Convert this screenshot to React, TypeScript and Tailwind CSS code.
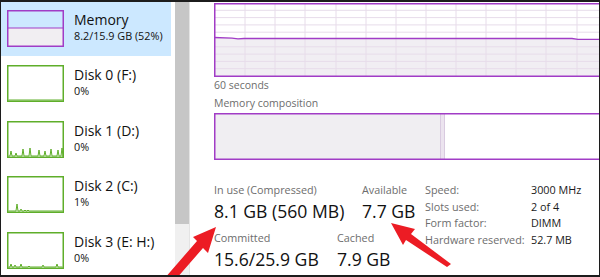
import type { ReactNode } from "react";

const purple = "#a13cc6";
const green = "#5fae2a";

type Row = { title: string; sub: string; kind: "mem" | "disk"; spikes?: number[][] };

const rows: Row[] = [
  { title: "Memory", sub: "8.2/15.9 GB (52%)", kind: "mem" },
  { title: "Disk 0 (F:)", sub: "0%", kind: "disk", spikes: [] },
  {
    title: "Disk 1 (D:)",
    sub: "0%",
    kind: "disk",
    spikes: [[4, 5], [9, 3], [16, 7], [23, 8], [32, 6], [38, 5], [44, 7], [51, 6], [55, 8]],
  },
  { title: "Disk 2 (C:)", sub: "1%", kind: "disk", spikes: [[10, 7], [14, 2], [18, 1], [21, 1]] },
  { title: "Disk 3 (E: H:)", sub: "0%", kind: "disk", spikes: [[4, 3], [8, 2], [14, 3], [22, 1], [36, 2], [50, 3]] },
];

function Thumb({ row }: { row: Row }) {
  if (row.kind === "mem") {
    return (
      <svg width="57" height="37" viewBox="0 0 57 37" className="shrink-0">
        <rect x="0.75" y="18" width="55.5" height="18" fill="#f1eef2" />
        <line x1="0.75" y1="18" x2="56.25" y2="18" stroke={purple} strokeWidth="1.2" />
        <rect x="0.75" y="0.75" width="55.5" height="35.5" fill="none" stroke={purple} strokeWidth="1.5" />
      </svg>
    );
  }
  const base = 35;
  let d = `M1.5 ${base}`;
  for (const [x, h] of row.spikes ?? []) {
    d += ` L${x - 1} ${base} L${x} ${base - h} L${x + 1} ${base}`;
  }
  d += ` L55.5 ${base}`;
  return (
    <svg width="57" height="37" viewBox="0 0 57 37" className="shrink-0">
      <path d={d} fill="none" stroke={green} strokeWidth="1" />
      <rect x="0.75" y="0.75" width="55.5" height="35.5" fill="none" stroke={green} strokeWidth="1.5" />
    </svg>
  );
}

function UsageChart() {
  const w = 400;
  const h = 74;
  const vx = [31, 61, 91, 122, 152, 182, 212, 242, 272, 302, 332, 363, 393];
  const hy = [7.3, 14.6, 21.9, 29.2, 43.8, 51.1, 58.4, 65.7];
  const line = "M0 34.5 L18 35.2 L24 35.8 L30 35.5 L358 35.5 L364 36.4 L400 36.4";
  return (
    <svg width={w} height={h} viewBox={`0 0 ${w} ${h}`} className="block shrink-0">
      <path d={`${line} L400 ${h} L0 ${h} Z`} fill="#f1eef3" />
      {hy.map((y) => (
        <line key={y} x1="0" y1={y} x2={w} y2={y} stroke="#e7dcea" strokeWidth="1" />
      ))}
      {vx.map((x) => (
        <line key={x} x1={x} y1="0" x2={x} y2={h} stroke="#e7dcea" strokeWidth="1" />
      ))}
      <path d={line} fill="none" stroke={purple} strokeWidth="1.3" />
      <rect x="0.75" y="0.75" width={w} height={h - 1.5} fill="none" stroke={purple} strokeWidth="1.5" />
    </svg>
  );
}

function CompositionBar() {
  return (
    <svg width="400" height="47" viewBox="0 0 400 47" className="block shrink-0">
      <rect x="0" y="0" width="226" height="47" fill="#f0eef2" />
      <rect x="226" y="0" width="5" height="47" fill="#ece4ef" />
      <line x1="226.5" y1="0" x2="226.5" y2="47" stroke="#d9cbe0" />
      <line x1="230.5" y1="0" x2="230.5" y2="47" stroke="#d9cbe0" />
      <rect x="0.75" y="0.75" width="400" height="45.5" fill="none" stroke={purple} strokeWidth="1.5" />
    </svg>
  );
}

function Stat({ label, value, className }: { label: string; value: string; className?: string }) {
  return (
    <div className={className}>
      <div className="whitespace-nowrap text-[10.8px] leading-[14px] text-[#6d6d6d]">{label}</div>
      <div className="mt-[2px] whitespace-nowrap text-[17.6px] leading-[24px] text-[#111]">{value}</div>
    </div>
  );
}

function Arrows() {
  return (
    <svg width="600" height="277" viewBox="0 0 600 277" className="pointer-events-none absolute left-0 top-0">
      <polygon points="215,225 207,251 202,246 175,277 163,277 196,239 192,235" fill="#ec1c24" />
      <polygon points="390,221 414,227 410,232 450,262 446,265 405,238 402,243" fill="#ec1c24" />
    </svg>
  );
}

function Pair({ k, v }: { k: string; v: ReactNode }) {
  return (
    <div className="flex whitespace-nowrap">
      <div className="w-[106px] shrink-0 text-[#6d6d6d]">{k}</div>
      <div className="text-[#1a1a1a]">{v}</div>
    </div>
  );
}

export default function App() {
  return (
    <div
      className="relative h-[277px] w-[600px] overflow-hidden border-x border-y-2 border-[#1c1c1c] bg-white"
      style={{ fontFamily: '"Open Sans", "Noto Sans", sans-serif' }}
    >
      <div className="flex h-full">
        {/* process list */}
        <div className="w-[174px] shrink-0">
          {rows.map((row, i) => (
            <div
              key={row.title}
              className={
                i === 0
                  ? "flex h-[54px] w-[170px] gap-[10px] bg-[#cce8ff] pl-[6px] pt-[8px]"
                  : "flex h-[55.5px] w-[170px] gap-[10px] pl-[6px] pt-[9px]"
              }
            >
              <Thumb row={row} />
              <div className="pt-[1px]">
                <div className="whitespace-nowrap text-[14px] leading-[18px] text-[#111]">{row.title}</div>
                <div className="whitespace-nowrap text-[10.8px] leading-[14px] text-[#111]">{row.sub}</div>
              </div>
            </div>
          ))}
        </div>

        {/* scrollbar */}
        <div className="flex w-[14px] shrink-0 flex-col bg-[#f0f0f0]">
          <div className="h-[222px] bg-[#c6c6c6]" />
        </div>
        <div className="w-[1px] shrink-0 bg-[#e4e4e4]" />

        {/* detail pane */}
        <div className="min-w-0 flex-1 overflow-hidden pl-[24px] pt-[1px]">
          <UsageChart />
          <div className="mt-[1px] text-[10.5px] leading-[14px] text-[#6d6d6d]">60 seconds</div>
          <div className="mt-[4px] text-[10.5px] leading-[14px] text-[#6d6d6d]">Memory composition</div>
          <div className="mt-[3px]">
            <CompositionBar />
          </div>

          <div className="mt-[23px] flex">
            <div className="shrink-0">
              <div className="flex">
                <Stat label="In use (Compressed)" value="8.1 GB (560 MB)" className="w-[148px] shrink-0" />
                <Stat label="Available" value="7.7 GB" className="w-[63px] shrink-0" />
              </div>
              <div className="mt-[8px] flex">
                <Stat label="Committed" value="15.6/25.9 GB" className="w-[123px] shrink-0" />
                <Stat label="Cached" value="7.9 GB" />
              </div>
            </div>
            <div className="-mt-[1px] shrink-0 text-[10.8px] leading-[16.5px]">
              <Pair k="Speed:" v="3000 MHz" />
              <Pair k="Slots used:" v="2 of 4" />
              <Pair k="Form factor:" v="DIMM" />
              <Pair k="Hardware reserved:" v="52.7 MB" />
            </div>
          </div>
        </div>
      </div>
      <Arrows />
    </div>
  );
}
